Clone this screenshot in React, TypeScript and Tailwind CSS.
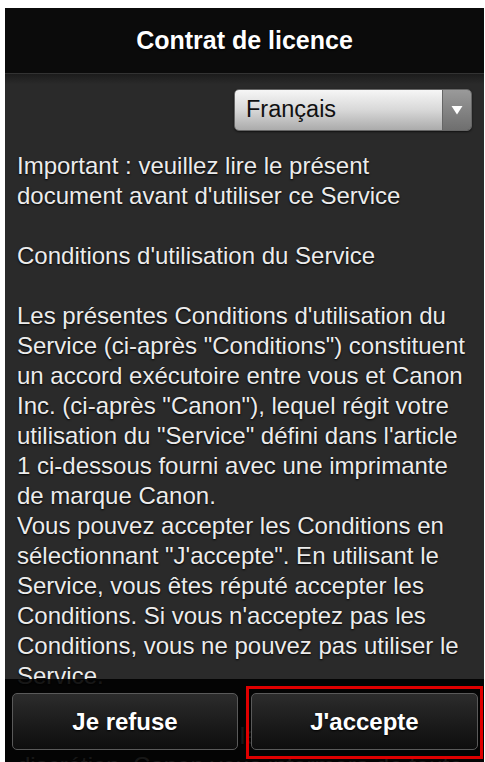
import React from 'react'

const paragraphs: string[][] = [
  ["Important : veuillez lire le présent", "document avant d'utiliser ce Service"],
  [""],
  ["Conditions d'utilisation du Service"],
  [""],
  [
    "Les présentes Conditions d'utilisation du",
    "Service (ci-après \"Conditions\") constituent",
    "un accord exécutoire entre vous et Canon",
    "Inc. (ci-après \"Canon\"), lequel régit votre",
    "utilisation du \"Service\" défini dans l'article",
    "1 ci-dessous fourni avec une imprimante",
    "de marque Canon.",
    "Vous pouvez accepter les Conditions en",
    "sélectionnant \"J'accepte\". En utilisant le",
    "Service, vous êtes réputé accepter les",
    "Conditions. Si vous n'acceptez pas les",
    "Conditions, vous ne pouvez pas utiliser le",
    "Service.",
  ],
  [""],
  ["Canon peut modifier les Conditions à sa", "discrétion. Canon vous informera de toute"],
]

const textShadow = '[text-shadow:0_1px_2px_rgba(0,0,0,1)]'

export default function App() {
  return (
    <div className="w-[485px] h-[762px] bg-white pl-[5px] pt-[8px] pr-[1px] font-['Liberation_Sans',Arial,sans-serif]">
      <div className="relative flex flex-col h-full overflow-hidden bg-[#2a2a2a]">
        {/* header */}
        <div className="h-[66px] shrink-0 flex items-center justify-center bg-[#0b0b0b] border-b border-[#333]">
          <h1 className={`text-white font-bold text-[25px] ${textShadow}`}>Contrat de licence</h1>
        </div>

        {/* body */}
        <div className="flex-1 bg-gradient-to-b from-[#1c1c1c] to-[#2a2a2a] to-[10px] px-[12px] pt-[15px]">
          <div className="flex justify-end">
            <div className="flex w-[238px] h-[42px] rounded-[5px] overflow-hidden border border-[#666] shadow-[0_1px_2px_rgba(0,0,0,0.6)]">
              <div className="flex-1 flex items-center pl-[11px] bg-gradient-to-b from-[#f6f6f6] via-[#d8d8d8] to-[#ababab] text-[#111] text-[23.5px]">
                Français
              </div>
              <div className="w-[29px] flex items-center justify-center bg-gradient-to-b from-[#9a9a9a] to-[#6f6f6f] border-l border-[#666]">
                <svg width="12" height="10" viewBox="0 0 12 10">
                  <path d="M0.5 1 L11.5 1 L6 9.5 Z" fill="#fff" />
                </svg>
              </div>
            </div>
          </div>

          <div className={`mt-[20px] text-[#ececec] text-[24px] leading-[30px] whitespace-nowrap ${textShadow}`}>
            {paragraphs.map((p, i) => (
              <p key={i}>
                {p.map((l, j) => (
                  <span key={j} className="block h-[30px]">{l}</span>
                ))}
              </p>
            ))}
          </div>
        </div>

        {/* bottom bar */}
        <div className="absolute left-0 right-0 bottom-0 h-[83px] bg-black/90 flex items-start gap-[8px] pl-[7px]">
          <button className={`shrink-0 mt-[14px] w-[226px] h-[57px] rounded-[5px] border border-[#5a5a5a] bg-gradient-to-b from-[#2c2c2c] to-[#0e0e0e] text-white font-bold text-[24px] ${textShadow}`}>
            Je refuse
          </button>
          <div className="shrink-0 mt-[7px] w-[237px] h-[73px] border-[3px] border-[#e00000] pt-[4px] px-[2px]">
            <button className={`w-full h-[57px] rounded-[5px] border border-[#5a5a5a] bg-gradient-to-b from-[#2c2c2c] to-[#0e0e0e] text-white font-bold text-[24px] ${textShadow}`}>
              J'accepte
            </button>
          </div>
        </div>
      </div>
    </div>
  )
}
